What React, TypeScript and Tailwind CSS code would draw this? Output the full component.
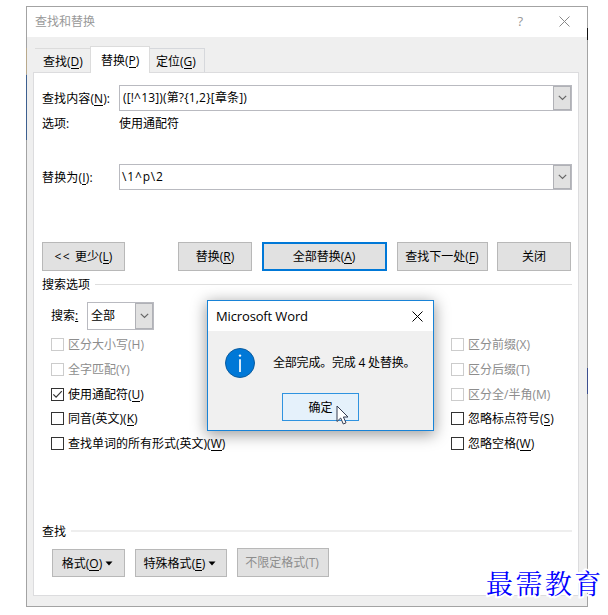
import React from "react";

function Key({ k }: { k: string }) {
  return (
    <>
      (<span className="border-b border-current inline-block leading-[12px] h-[13px]">{k}</span>)
    </>
  );
}

function Chevron() {
  return (
    <svg width="9" height="6" viewBox="0 0 9 6" fill="none" stroke="#666" strokeWidth="1.2">
      <path d="M0.8 0.8 L4.5 4.5 L8.2 0.8" />
    </svg>
  );
}

function Combo({ text, className, textClass }: { text: string; className: string; textClass: string }) {
  return (
    <div className={"flex border border-[#b9bac0] bg-white " + className}>
      <div className={"flex-1 whitespace-pre " + textClass}>{text}</div>
      <div className="flex w-[18px] items-center justify-center border border-[#b0b1b6] bg-[#e1e1e1]">
        <Chevron />
      </div>
    </div>
  );
}

function Button({ children, className }: { children: React.ReactNode; className: string }) {
  return (
    <div className={"flex shrink-0 items-center justify-center whitespace-pre bg-[#e1e1e1] pt-px " + className}>
      {children}
    </div>
  );
}

function Check({ text, k, underline, disabled, checked }: { text: string; k: string; underline?: boolean; disabled?: boolean; checked?: boolean }) {
  return (
    <div className={"flex h-[24.75px] items-start whitespace-nowrap " + (disabled ? "text-[#8d8d8d]" : "text-black")}>
      <div className={"h-[13px] w-[13px] shrink-0 border bg-white " + (disabled ? "border-[#cccccc]" : "border-[#333]")}>
        {checked && (
          <svg width="11" height="11" viewBox="0 0 11 11" fill="none" stroke="#333" strokeWidth="1.2">
            <path d="M1.3 5.3 L4.1 8.2 L9.8 2.2" />
          </svg>
        )}
      </div>
      <div className="ml-1 leading-[13px]">
        {text}
        {underline ? <Key k={k} /> : `(${k})`}
      </div>
    </div>
  );
}

function Cross({ size, color }: { size: number; color: string }) {
  return (
    <svg width={size} height={size} viewBox="0 0 11 11" fill="none" stroke={color} strokeWidth="1">
      <path d="M0.5 0.5 L10.5 10.5 M10.5 0.5 L0.5 10.5" />
    </svg>
  );
}

function MessageBox() {
  return (
    <div className="absolute left-[207px] top-[300px] flex h-[131px] w-[227px] flex-col border border-[#1883d7] bg-[#f0f0f0] shadow-[0_3px_14px_1px_rgba(0,0,0,0.38)]">
      <div className="flex h-[30px] items-center justify-between bg-white pl-2 pr-[10px]">
        <span className="text-[13px] leading-[30px] tracking-[-0.14px]">Microsoft Word</span>
        <Cross size={11} color="#000" />
      </div>
      <div className="flex h-[62px] items-center pl-[17px] pt-[2px]">
        <svg width="30" height="30" viewBox="0 0 30 30">
          <circle cx="15" cy="15" r="14.5" fill="#0078d7" stroke="#0c5c9e" strokeWidth="1" />
          <circle cx="15" cy="7.6" r="1.2" fill="#fff" />
          <path d="M15 11.2 V24" stroke="#fff" strokeWidth="1.7" />
        </svg>
        <span className="ml-[18px] whitespace-pre tracking-[-0.2px]">全部完成。完成 4 处替换。</span>
      </div>
      <div className="ml-[74px] flex h-7 w-[77px] items-center justify-center border border-[#2f93e0] bg-[#e5f1fb] pt-px">确定</div>
      <svg className="absolute left-[128px] top-[104px]" width="14" height="21" viewBox="0 0 14 21">
        <path d="M1 1 V16.5 L4.7 13 L7.3 19 L10 17.8 L7.4 12 H12 Z" fill="#fff" stroke="#333a50" strokeWidth="1" />
      </svg>
    </div>
  );
}

export default function App() {
  return (
    <div className="relative h-[615px] w-[608px] overflow-hidden bg-white pl-[26px] pt-[6px] text-[12px] text-black [font-family:'Open_Sans','Noto_Sans_CJK_SC',sans-serif]">
      <div className="flex h-[601px] w-[562px] flex-col border border-[#a3a3a3] bg-[#efefef]">
        <div className="flex h-[30px] shrink-0 items-center bg-white pl-2 text-[#999]">
          <span className="flex-1">查找和替换</span>
          <span className="mr-[36px] text-[13px]">?</span>
          <span className="mr-[17px] -mt-[2px]"><Cross size={11} color="#888" /></span>
        </div>
        <div className="flex h-[35px] shrink-0 items-end pl-2">
          <div className="flex h-6 w-[55px] items-center border-t border-[#dcdcdc] pl-2 pt-[2px] whitespace-nowrap">
            <span>查找<Key k="D" /></span>
          </div>
          <div className="z-10 -mb-px flex h-[27px] w-[60px] items-center border border-b-0 border-[#dcdcdc] bg-white pl-[10px] pt-px whitespace-nowrap">
            <span>替换<Key k="P" /></span>
          </div>
          <div className="flex h-6 w-[55px] items-center border-r border-t border-[#d6d8dc] pl-[6px] pt-[2px] whitespace-nowrap">
            <span>定位<Key k="G" /></span>
          </div>
        </div>
        <div className="ml-[6px] flex h-[524px] w-[546px] flex-col border border-[#dcdcde] bg-white pl-2">
          <div className="mt-3 flex h-[26px] items-center">
            <span className="w-[77px] whitespace-nowrap pt-px tracking-[0.1px]">查找内容<Key k="N" />:</span>
            <Combo text="([!^13])(第?{1,2}[章条])" className="h-[26px] w-[453px]" textClass="pl-[3px] leading-[23px] tracking-[0.16px]" />
          </div>
          <div className="mt-1 flex h-[18px] items-center">
            <span className="w-[77px]">选项:</span>
            <span>使用通配符</span>
          </div>
          <div className="mt-[31px] flex h-[26px] items-center">
            <span className="w-[77px] whitespace-nowrap pt-px tracking-[0.15px]">替换为<Key k="I" />:</span>
            <Combo text="\1^p\2" className="h-[26px] w-[453px]" textClass="pl-[2px] leading-[23px] tracking-[0.85px]" />
          </div>
          <div className="mt-[52px] flex h-[29px]">
            <Button className="w-[83px] border border-[#b8b8b8]"><span><span className="tracking-[1.2px]">&lt;&lt; </span>更少<Key k="L" /></span></Button>
            <Button className="ml-[53px] w-[74px] border border-[#b8b8b8]"><span>替换<Key k="R" /></span></Button>
            <Button className="ml-[10px] w-[125px] border-2 border-[#0078d7]"><span className="pr-px">全部替换<Key k="A" /></span></Button>
            <Button className="ml-[10px] w-[91px] border border-[#b8b8b8]"><span className="pr-px">查找下一处<Key k="F" /></span></Button>
            <Button className="ml-[9px] w-[74px] border border-[#b8b8b8]">关闭</Button>
          </div>
          <div className="mt-1 flex h-[18px] items-center">
            <span className="w-[53px] pt-[2px]">搜索选项</span>
            <div className="h-px w-[477px] bg-[#dedede]" />
          </div>
          <div className="mt-[9px] flex h-7 items-center pl-[9px]">
            <span className="w-9">搜索<span className="underline">:</span></span>
            <Combo text="全部" className="h-7 w-[67px]" textClass="pl-[3px] leading-[25px]" />
          </div>
          <div className="mt-2 flex h-[125px] pl-[9px]">
            <div className="w-[400px]">
              <Check text="区分大小写" k="H" disabled />
              <Check text="全字匹配" k="Y" disabled />
              <Check text="使用通配符" k="U" underline checked />
              <Check text="同音(英文)" k="K" underline />
              <Check text="查找单词的所有形式(英文)" k="W" underline />
            </div>
            <div>
              <Check text="区分前缀" k="X" disabled />
              <Check text="区分后缀" k="T" disabled />
              <Check text="区分全/半角" k="M" disabled />
              <Check text="忽略标点符号" k="S" underline />
              <Check text="忽略空格" k="W" underline />
            </div>
          </div>
          <div className="mt-[59px] flex h-[18px] items-center">
            <span className="w-[29px] pt-[2px]">查找</span>
            <div className="h-[2px] w-[501px] bg-[#eeeeee]" />
          </div>
          <div className="mt-2 flex h-[29px] items-end pl-[10px]">
            <Button className="h-7 w-[73px] border border-[#b8b8b8] pr-[2px]">
              <span>格式<Key k="O" /></span>
              <svg className="ml-[3px]" width="8" height="5" viewBox="0 0 7 5"><path d="M0 0.5H7L3.5 4.5Z" /></svg>
            </Button>
            <Button className="ml-[10px] h-7 w-[92px] border border-[#b8b8b8] pr-[2px]">
              <span>特殊格式<Key k="E" /></span>
              <svg className="ml-[3px]" width="8" height="5" viewBox="0 0 7 5"><path d="M0 0.5H7L3.5 4.5Z" /></svg>
            </Button>
            <Button className="ml-[10px] h-[29px] w-[92px] border border-[#b8b8b8] pr-[2px] text-[#8d8d8d]">不限定格式(T)</Button>
          </div>
        </div>
      </div>
      <div className="absolute left-[26px] top-[75px] h-[65px] w-px bg-[#3d5f8f]" />
      <div className="absolute left-[26px] top-[48px] h-[26px] w-px bg-[#b9a98c]" />
      <div className="absolute left-[587px] top-[28px] h-[12px] w-px bg-[#111]" />
      <div className="absolute left-[587px] top-[368px] h-[26px] w-px bg-[#3d4f8f]" />
      <MessageBox />
      <div className="absolute left-[486px] top-[565px] whitespace-nowrap text-[27px] leading-[36px] tracking-[2.4px] text-[#0000ff] [font-family:'AR_PL_UKai_CN','KaiTi','Noto_Serif_CJK_SC','Noto_Sans_CJK_SC',serif] [paint-order:stroke_fill] [-webkit-text-stroke:4px_white]">
        最需教育
      </div>
    </div>
  );
}
